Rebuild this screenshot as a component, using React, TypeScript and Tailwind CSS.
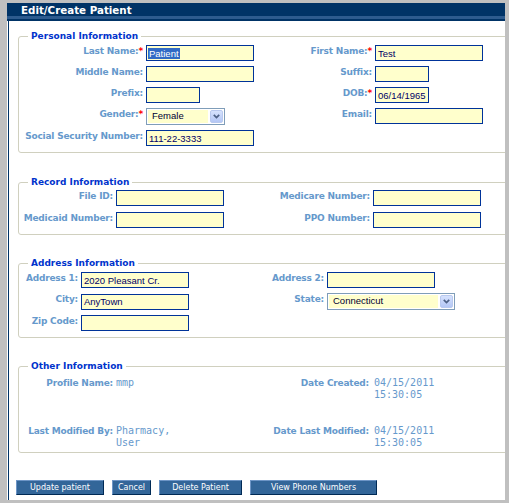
import React from 'react'

const sans = "font-['DejaVu_Sans',Verdana,sans-serif]"
const lbl = `${sans} text-[9px] leading-[12px] font-bold tracking-[-0.2px] text-[#6699cc] text-right whitespace-nowrap shrink-0`
const val = "font-['DejaVu_Sans_Mono',monospace] text-[10px] leading-[12px] text-[#6699cc] whitespace-nowrap"

const Req = () => <span className="text-[#ff0000]">*</span>

const Input = ({ w, value, selected }: { w: string; value?: string; selected?: boolean }) => (
  <div
    className={`${w} h-[16px] border border-[#003399] bg-[#ffffcc] flex items-center pl-[1px] overflow-hidden font-['Liberation_Sans',Arial,sans-serif] text-[9.5px] text-[#000066] whitespace-nowrap`}
  >
    {selected ? (
      <span className="bg-[#316ac5] text-white leading-[11px] px-[1px]">{value}</span>
    ) : (
      <span className="pl-[1px] leading-[11px]">{value}</span>
    )}
  </div>
)

const Select = ({ w, value }: { w: string; value: string }) => (
  <div className={`${w} h-[17px] border border-[#7f9db9] bg-white p-[1px] flex gap-[2px]`}>
    <div className="flex-1 bg-[#ffffcc] flex items-center pl-[4px] font-['Liberation_Sans',Arial,sans-serif] text-[9.5px] text-[#000033] whitespace-nowrap overflow-hidden">
      {value}
    </div>
    <div className="w-[13px] rounded-[2px] border border-[#b9c9ef] bg-gradient-to-b from-[#d6e2fd] to-[#b4c7f5] flex items-center justify-center">
      <svg width="7" height="5" viewBox="0 0 7 5">
        <path d="M0.8 0.8 L3.5 3.6 L6.2 0.8" fill="none" stroke="#4d6185" strokeWidth="1.7" />
      </svg>
    </div>
  </div>
)

type RowProps = {
  a?: React.ReactNode
  b?: React.ReactNode
  c?: React.ReactNode
  d?: React.ReactNode
  cols: [string, string, string]
}

const Row = ({ a, b, c, d, cols }: RowProps) => (
  <div className="flex items-start">
    <div className={`${cols[0]} ${lbl}`}>{a}</div>
    <div className={`${cols[1]} shrink-0 pl-[3px]`}>{b}</div>
    <div className={`${cols[2]} ${lbl}`}>{c}</div>
    <div className="pl-[3px]">{d}</div>
  </div>
)

const Section = ({ title, className, children }: { title: string; className: string; children: React.ReactNode }) => (
  <fieldset className={`ml-[9px] w-[500px] shrink-0 border border-[#d0d0bf] rounded-[3px] pl-[2px] ${className}`}>
    <legend className={`ml-[7px] px-[3px] ${sans} text-[9px] leading-[13px] font-bold text-[#0033cc]`}>{title}</legend>
    {children}
  </fieldset>
)

const Btn = ({ w, children }: { w: string; children: React.ReactNode }) => (
  <button
    className={`${w} h-[15px] bg-[#336699] border border-t-[#6d95c6] border-l-[#6d95c6] border-b-[#002a55] border-r-[#002a55] text-white ${sans} text-[8px] leading-[13px] text-center whitespace-nowrap`}
  >
    {children}
  </button>
)

const personal: [string, string, string] = ['w-[122px]', 'w-[129px]', 'w-[100px]']
const record: [string, string, string] = ['w-[92px]', 'w-[147px]', 'w-[110px]']
const address: [string, string, string] = ['w-[57px]', 'w-[172px]', 'w-[74px]']

export default function App() {
  return (
    <div className="w-[509px] h-[503px] bg-[#c0c0c0] pt-[3px] pl-[7px] pr-[4px] overflow-hidden">
      <div className="w-[498px] h-[497px] bg-white flex flex-col overflow-hidden">
        <div className="shrink-0">
          <div className={`h-[13px] bg-[#003366] pl-[14px] pt-[1px] ${sans} text-[10.3px] leading-[12px] font-bold text-white whitespace-nowrap`}>
            Edit/Create Patient
          </div>
          <div className="h-[3px] bg-[#2d5b8e]" />
          <div className="h-[2px] bg-[#003366]" />
        </div>

        <div className="flex-1 ml-[1px] border-l border-[#003366] flex flex-col overflow-hidden">
          <Section title="Personal Information" className="mt-[9px] pb-[6px]">
            <div className="pt-[2px] flex flex-col gap-[5px]">
              <Row
                cols={personal}
                a={<>Last Name:<Req /></>}
                b={<Input w="w-[108px]" value="Patient" selected />}
                c={<>First Name:<Req /></>}
                d={<Input w="w-[108px]" value="Test" />}
              />
              <Row
                cols={personal}
                a="Middle Name:"
                b={<Input w="w-[108px]" />}
                c="Suffix:"
                d={<Input w="w-[54px]" />}
              />
              <Row
                cols={personal}
                a="Prefix:"
                b={<Input w="w-[54px]" />}
                c={<>DOB:<Req /></>}
                d={<Input w="w-[54px]" value="06/14/1965" />}
              />
              <Row
                cols={personal}
                a={<>Gender:<Req /></>}
                b={<Select w="w-[79px]" value="Female" />}
                c="Email:"
                d={<Input w="w-[108px]" />}
              />
              <Row
                cols={personal}
                a="Social Security Number:"
                b={<Input w="w-[108px]" value="111-22-3333" />}
              />
            </div>
          </Section>

          <Section title="Record Information" className="mt-[23px] pb-[6px]">
            <div className="pt-[1px] flex flex-col gap-[6px]">
              <Row
                cols={record}
                a="File ID:"
                b={<Input w="w-[108px]" />}
                c="Medicare Number:"
                d={<Input w="w-[108px]" />}
              />
              <Row
                cols={record}
                a="Medicaid Number:"
                b={<Input w="w-[108px]" />}
                c="PPO Number:"
                d={<Input w="w-[108px]" />}
              />
            </div>
          </Section>

          <Section title="Address Information" className="mt-[22px] pb-[6px]">
            <div className="pt-[2px] flex flex-col gap-[5px]">
              <Row
                cols={address}
                a="Address 1:"
                b={<Input w="w-[108px]" value="2020 Pleasant Cr." />}
                c="Address 2:"
                d={<Input w="w-[108px]" />}
              />
              <div className="flex items-center">
                <div className={`w-[57px] ${lbl} self-start`}>City:</div>
                <div className="w-[172px] shrink-0 pl-[3px]">
                  <Input w="w-[108px]" value="AnyTown" />
                </div>
                <div className={`w-[74px] ${lbl} self-start`}>State:</div>
                <div className="pl-[3px]">
                  <Select w="w-[128px]" value="Connecticut" />
                </div>
              </div>
              <Row cols={address} a="Zip Code:" b={<Input w="w-[108px]" />} />
            </div>
          </Section>

          <Section title="Other Information" className="mt-[22px] pb-[3px]">
            <div className="pt-[4px] flex flex-col gap-[24px]">
              <div className="flex items-start h-[24px]">
                <div className={`w-[92px] ${lbl}`}>Profile Name:</div>
                <div className={`w-[146px] shrink-0 pl-[3px] ${val}`}>mmp</div>
                <div className={`w-[110px] ${lbl}`}>Date Created:</div>
                <div className={`pl-[5px] ${val}`}>
                  04/15/2011
                  <br />
                  15:30:05
                </div>
              </div>
              <div className="flex items-start h-[24px]">
                <div className={`w-[92px] ${lbl}`}>Last Modified By:</div>
                <div className={`w-[146px] shrink-0 pl-[3px] ${val}`}>
                  Pharmacy,
                  <br />
                  User
                </div>
                <div className={`w-[110px] ${lbl}`}>Date Last Modified:</div>
                <div className={`pl-[5px] ${val}`}>
                  04/15/2011
                  <br />
                  15:30:05
                </div>
              </div>
            </div>
          </Section>

          <div className="ml-[7px] mt-[27px] flex gap-[8px] shrink-0">
            <Btn w="w-[88px]">Update patient</Btn>
            <Btn w="w-[39px]">Cancel</Btn>
            <Btn w="w-[83px]">Delete Patient</Btn>
            <Btn w="w-[127px]">View Phone Numbers</Btn>
          </div>
        </div>
      </div>
    </div>
  )
}
